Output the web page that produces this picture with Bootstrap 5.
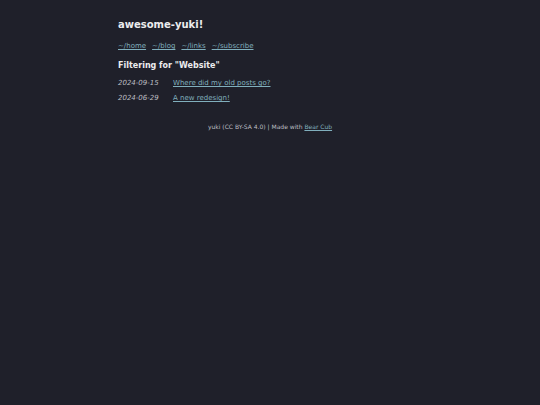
<!DOCTYPE html>
<html lang="en" data-bs-theme="dark">
<head>
<meta charset="utf-8">
<meta name="viewport" content="width=device-width, initial-scale=1">
<title>awesome-yuki!</title>
<link href="https://cdn.jsdelivr.net/npm/bootstrap@5.3.0/dist/css/bootstrap.min.css" rel="stylesheet">
<style>
body { background: #1f202a; color: #bebfc3; font-family: "DejaVu Sans", Verdana, sans-serif; font-size: 7px; line-height: 11px; }
.page { max-width: 304px; padding-top: 18px; }
.site-title { font-size: 10px; line-height: 14px; font-weight: 700; color: #ececee; }
.section-title { font-size: 8px; line-height: 10px; font-weight: 700; color: #ececee; }
a, a:hover { color: #80afbd; }
.site-nav { gap: 6px; margin-top: 9px; margin-bottom: 9px; }
.posts { gap: 4px; margin-top: 7px; }
.post-date { width: 55px; }
.site-footer { font-size: 6px; line-height: 10px; margin-top: 18px; }
</style>
</head>
<body>
<div class="container-fluid page mx-auto px-0">
  <header>
    <h1 class="site-title mb-0">awesome-yuki!</h1>
    <nav class="site-nav d-flex">
      <a href="#home">~/home</a>
      <a href="#blog">~/blog</a>
      <a href="#links">~/links</a>
      <a href="#subscribe">~/subscribe</a>
    </nav>
  </header>
  <main>
    <h2 class="section-title mb-0">Filtering for "Website"</h2>
    <ul class="posts list-unstyled d-flex flex-column mb-0">
      <li class="d-flex"><time class="post-date fst-italic flex-shrink-0" datetime="2024-09-15">2024-09-15</time><a href="#old-posts">Where did my old posts go?</a></li>
      <li class="d-flex"><time class="post-date fst-italic flex-shrink-0" datetime="2024-06-29">2024-06-29</time><a href="#redesign">A new redesign!</a></li>
    </ul>
  </main>
  <footer class="site-footer text-center">yuki (CC BY-SA 4.0) | Made with <a href="#bear">Bear Cub</a></footer>
</div>
<script src="https://cdn.jsdelivr.net/npm/bootstrap@5.3.0/dist/js/bootstrap.bundle.min.js"></script>
</body>
</html>
